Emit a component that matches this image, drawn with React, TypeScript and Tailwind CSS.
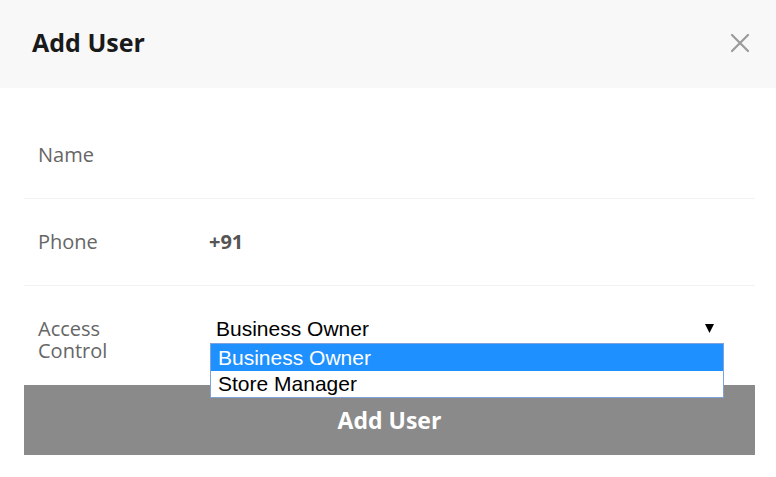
import React from "react";

export default function App() {
  const sans = { fontFamily: '"Open Sans", Arial, sans-serif' };
  const arial = { fontFamily: '"Liberation Sans", Arial, sans-serif' };
  return (
    <div className="relative w-[776px] h-[477px] bg-white overflow-hidden" style={sans}>
      <div className="h-[88px] bg-[#f8f8f8] flex items-center justify-between pl-[32px] pr-[26px] pb-[3px]">
        <h1 className="text-[25px] font-bold text-[#1a1a1a] leading-none">Add User</h1>
        <svg width="20" height="20" viewBox="0 0 20 20" className="mt-[1px]">
          <path d="M2 2 L18 18 M18 2 L2 18" stroke="#9a9a9a" strokeWidth="2.2" strokeLinecap="round" />
        </svg>
      </div>
      <div className="pt-[24px] pl-[24px] pr-[21px]">
        <div className="h-[87px] flex items-center pl-[14px] border-b border-[#f2f2f2]">
          <span className="text-[20px] text-[#666]">Name</span>
        </div>
        <div className="h-[87px] flex items-center pl-[14px] border-b border-[#f2f2f2]">
          <span className="w-[171px] text-[20px] text-[#666]">Phone</span>
          <span className="text-[20px] font-bold text-[#555]">+91</span>
        </div>
        <div className="h-[99px] flex items-start pl-[14px] pt-[32px]">
          <span className="w-[172px] text-[20px] leading-[22px] text-[#666]">
            Access
            <br />
            Control
          </span>
          <div
            className="w-[513px] flex items-center justify-between pl-[6px] pr-[9px] text-[21px] leading-[22px] text-black"
            style={arial}
          >
            <span>Business Owner</span>
            <svg width="9" height="9" viewBox="0 0 9 9" className="mb-[2px]">
              <path d="M0 0 H9 L4.5 9 Z" fill="#000" />
            </svg>
          </div>
        </div>
        <button
          className="w-full h-[70px] bg-[#8a8a8a] text-white text-[23px] font-bold flex items-center justify-center"
          style={sans}
        >
          Add User
        </button>
      </div>
      <div
        className="absolute left-[210px] top-[343px] w-[514px] border border-[#7fa2dc] bg-white text-[21px] leading-[24px]"
        style={arial}
      >
        <div className="h-[27px] bg-[#1e90ff] text-white pl-[7px] flex items-center">Business Owner</div>
        <div className="h-[26px] text-black pl-[7px] flex items-center">Store Manager</div>
      </div>
    </div>
  );
}
